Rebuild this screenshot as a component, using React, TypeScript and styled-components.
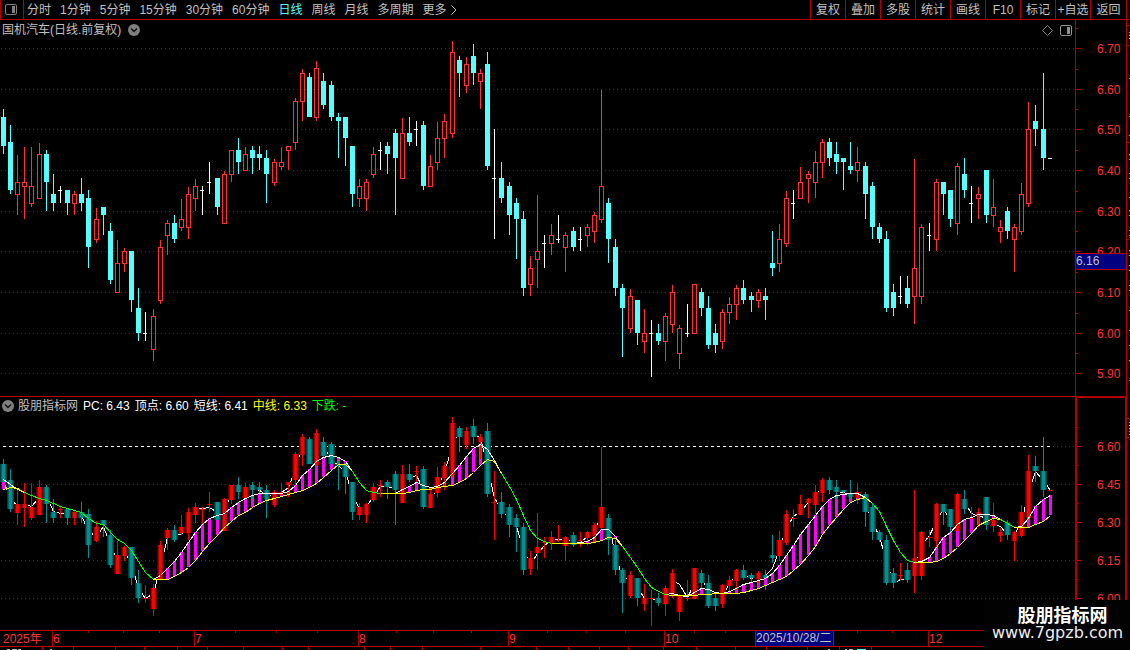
import React from "react";
import styled, { createGlobalStyle } from "styled-components";

const LINE = "#b00000";
const LABEL = "#ff3232";
const GREY = "#c0c0c0";
const FONT = '"Liberation Sans", "Noto Sans CJK SC", sans-serif';

const GlobalStyle = createGlobalStyle`
  * { box-sizing: border-box; }
  body { margin: 0; background: #000; }
  button { font: inherit; color: inherit; background: none; border: 0; padding: 0; margin: 0; cursor: pointer; }
  svg { display: block; }
`;

const Screen = styled.div`
  position: relative;
  overflow: hidden;
  background: #000;
  color: ${GREY};
  font: 12px/16px ${FONT};
`;

const TopBar = styled.header`
  display: flex;
  height: 20px;
  border-bottom: 1px solid ${LINE};
  border-left: 1px solid ${LINE};
`;

const LayoutToggle = styled.button`
  display: grid;
  place-items: center;
  width: 23px;
  padding-right: 2px;
  border-right: 1px solid ${LINE};
`;

const Periods = styled.nav`
  display: flex;
  align-items: center;
  gap: 9px;
  padding-left: 3px;
`;

const PeriodButton = styled.button<{ $active?: boolean }>`
  white-space: nowrap;
  color: ${(p) => (p.$active ? "#54ffff" : GREY)};
  display: flex;
  align-items: center;
  gap: 4px;
`;

const Tools = styled.div`
  display: flex;
  margin-left: auto;
  width: 317px;
  margin-right: 3px;
  border-right: 1px solid ${LINE};
`;

const ToolButton = styled.button`
  flex: 0 0 35px;
  border-left: 1px solid ${LINE};
  white-space: nowrap;
  display: flex;
  align-items: center;
  justify-content: center;
  &:last-child { flex: 1; }
`;

const Pane = styled.section`
  display: grid;
  grid-template-columns: minmax(0, 1fr) 52px 3px;
`;

const Plot = styled.div<{ $ruled?: boolean }>`
  border-top: ${(p) => (p.$ruled ? `1px solid ${LINE}` : "0")};
`;

const PaneHeader = styled.div<{ $height: number; $gap: number }>`
  display: flex;
  align-items: center;
  gap: ${(p) => p.$gap}px;
  height: ${(p) => p.$height}px;
  padding: 0 3px 0 2px;
  white-space: nowrap;
`;

const IndicatorName = styled.div`
  display: flex;
  align-items: center;
  gap: 4px;
`;

const HeaderTools = styled.div`
  display: flex;
  align-items: center;
  gap: 7px;
  margin-left: auto;
`;

const Reading = styled.span<{ $color: string }>`
  color: ${(p) => p.$color};
`;

const Chart = styled.svg<{ $height: number }>`
  width: 100%;
  height: ${(p) => p.$height}px;
  shape-rendering: crispEdges;
`;

const PriceAxis = styled.div<{ $thick?: boolean }>`
  position: relative;
  overflow: hidden;
  border: ${(p) => (p.$thick ? 2 : 1)}px solid ${LINE};
  border-bottom: 0;
  border-top-width: ${(p) => (p.$thick ? 2 : 0)}px;
`;

const AxisText = styled.text`
  fill: ${LABEL};
  font: 12px ${FONT};
`;

const PriceTag = styled.output`
  position: absolute;
  top: 233px;
  left: 0;
  right: 0;
  height: 17px;
  line-height: 15px;
  background: #000080;
  border: solid ${LINE};
  border-width: 1px 0;
`;

const DateAxis = styled.div`
  position: relative;
  border: solid ${LINE};
  border-width: 1px 0;
`;

const DateTag = styled.output`
  position: absolute;
  top: 0;
  left: 755px;
  height: 15px;
  line-height: 15px;
  width: 79px;
  background: #000080;
  border: solid ${LINE};
  border-width: 0 1px;
  white-space: nowrap;
`;

const Watermark = styled.aside`
  position: absolute;
  right: 0;
  bottom: 0;
  width: 146px;
  height: 50px;
  padding: 4px 6px 0 7px;
  background: #020202;
  color: #fff;
  text-align: center;
`;

const WatermarkName = styled.div`
  font: bold 18px/20px "Noto Sans CJK SC", sans-serif;
  padding-left: 10px;
`;

const WatermarkSite = styled.a`
  display: block;
  color: #eee;
  text-decoration: none;
  font: 16px/18px "DejaVu Sans", sans-serif;
`;

/* D: falling day, U: rising day, N: open equals close.
   Levels are high, body top, body bottom, low on the price pane scale. */
type Day = [string, number, number, number, number];

const DAYS: Day[] = [
  ["D", 109, 117, 146, 154], ["D", 125, 142, 190, 194], ["U", 155, 182, 195, 215], ["U", 147, 182, 187, 219],
  ["U", 147, 186, 204, 207], ["U", 143, 154, 199, 199], ["D", 150, 154, 182, 211], ["D", 174, 194, 203, 211],
  ["N", 186, 190, 191, 203], ["D", 190, 190, 203, 215], ["U", 191, 194, 204, 215], ["D", 178, 194, 203, 211],
  ["D", 190, 198, 247, 268], ["U", 208, 219, 240, 243], ["D", 207, 207, 215, 235], ["D", 223, 231, 280, 284],
  ["U", 240, 263, 293, 293], ["U", 248, 251, 264, 272], ["D", 251, 251, 300, 312], ["D", 288, 308, 333, 341],
  ["N", 312, 333, 334, 341], ["U", 309, 316, 350, 361], ["U", 240, 247, 301, 304], ["U", 220, 223, 236, 255],
  ["D", 215, 223, 239, 243], ["U", 199, 219, 228, 231], ["U", 187, 194, 228, 239], ["U", 179, 186, 199, 211],
  ["N", 186, 190, 191, 215], ["N", 162, 182, 183, 194], ["D", 178, 178, 207, 215], ["U", 171, 174, 224, 224],
  ["U", 150, 150, 175, 182], ["D", 138, 150, 162, 174], ["U", 147, 154, 171, 171], ["D", 146, 150, 158, 174],
  ["D", 146, 154, 158, 170], ["D", 150, 158, 174, 203], ["U", 159, 162, 183, 186], ["U", 147, 162, 167, 170],
  ["U", 146, 146, 151, 170], ["U", 98, 101, 143, 150], ["U", 69, 73, 102, 121], ["D", 73, 77, 117, 117],
  ["U", 61, 68, 118, 121], ["D", 73, 81, 105, 109], ["D", 81, 85, 117, 121], ["D", 113, 117, 121, 158],
  ["D", 117, 117, 138, 166], ["D", 146, 146, 194, 207], ["U", 179, 186, 199, 207], ["U", 179, 182, 199, 211],
  ["U", 147, 154, 175, 178], ["N", 142, 150, 151, 170], ["D", 142, 146, 154, 174], ["D", 129, 133, 158, 215],
  ["U", 118, 133, 179, 179], ["D", 117, 133, 142, 146], ["N", 121, 129, 130, 146], ["D", 121, 125, 186, 190],
  ["U", 155, 166, 187, 187], ["U", 122, 138, 163, 170], ["U", 114, 121, 139, 158], ["U", 41, 52, 134, 138],
  ["D", 56, 60, 73, 97], ["U", 57, 64, 86, 93], ["D", 44, 56, 73, 85], ["U", 69, 73, 82, 109],
  ["D", 52, 64, 166, 170], ["N", 129, 178, 179, 239], ["D", 162, 178, 198, 203], ["D", 182, 186, 215, 235],
  ["D", 198, 203, 219, 259], ["D", 211, 219, 288, 296], ["U", 256, 268, 285, 296], ["U", 195, 251, 260, 288],
  ["N", 235, 243, 244, 268], ["U", 224, 235, 244, 255], ["N", 215, 239, 240, 243], ["U", 232, 235, 248, 272],
  ["D", 227, 231, 247, 251], ["N", 227, 239, 240, 251], ["U", 224, 227, 236, 247], ["U", 212, 215, 232, 243],
  ["U", 90, 186, 220, 223], ["D", 198, 203, 239, 263], ["D", 239, 247, 288, 296], ["D", 284, 288, 308, 357],
  ["U", 289, 296, 329, 333], ["D", 300, 300, 333, 345], ["U", 309, 333, 342, 353], ["N", 320, 333, 334, 377],
  ["D", 324, 333, 341, 345], ["U", 313, 316, 342, 361], ["U", 285, 292, 325, 333], ["U", 325, 328, 354, 369],
  ["N", 304, 333, 334, 337], ["U", 284, 284, 334, 334], ["D", 288, 292, 308, 316], ["D", 296, 308, 345, 349],
  ["D", 324, 333, 345, 353], ["U", 309, 312, 342, 349], ["U", 297, 304, 313, 324], ["U", 285, 288, 305, 320],
  ["D", 280, 288, 300, 304], ["D", 292, 296, 300, 312], ["U", 289, 292, 301, 308], ["D", 288, 296, 300, 320],
  ["D", 231, 263, 268, 276], ["U", 224, 239, 264, 272], ["U", 191, 198, 244, 247], ["N", 190, 203, 204, 219],
  ["U", 167, 182, 199, 199], ["U", 171, 174, 179, 203], ["U", 151, 162, 183, 198], ["U", 139, 142, 163, 178],
  ["D", 138, 142, 158, 166], ["D", 142, 154, 162, 174], ["D", 158, 158, 162, 190], ["D", 142, 166, 170, 174],
  ["U", 147, 162, 171, 182], ["D", 162, 166, 194, 219], ["D", 182, 186, 227, 239], ["D", 223, 227, 239, 243],
  ["D", 231, 239, 308, 312], ["D", 284, 292, 308, 316], ["N", 276, 296, 297, 304], ["D", 276, 288, 304, 308],
  ["U", 159, 268, 297, 324], ["U", 224, 227, 297, 304], ["N", 223, 235, 236, 251], ["U", 179, 182, 240, 251],
  ["D", 182, 182, 194, 215], ["D", 190, 190, 219, 227], ["U", 163, 166, 224, 235], ["D", 158, 174, 190, 198],
  ["N", 186, 203, 204, 223], ["U", 187, 194, 199, 219], ["D", 170, 170, 215, 223], ["U", 179, 207, 216, 227],
  ["U", 220, 227, 232, 243], ["D", 207, 211, 231, 239], ["U", 224, 227, 240, 272], ["U", 183, 194, 232, 235],
  ["U", 102, 129, 204, 207], ["D", 105, 121, 129, 146], ["D", 73, 129, 158, 170], ["N", 158, 158, 159, 159],
];

/* Stretches where the short average runs above the middle one. */
const RISES = [
  { start: 0, short: [479, 484, 489, 492], mid: [489, 487, 488, 492] },
  {
    start: 21,
    short: [579, 575, 568, 561, 552, 542, 532, 524, 518, 515, 513, 507, 502, 498, 495, 493, 493, 493, 493, 491, 485, 475, 469, 461, 457, 455, 457, 461, 471],
    mid: [579, 579, 579, 576, 572, 567, 560, 551, 543, 535, 527, 521, 515, 512, 507, 503, 500, 498, 496, 494, 492, 490, 487, 483, 477, 470, 464, 464, 471],
  },
  {
    start: 53,
    short: [493, 493, 493, 489, 486, 482, 485, 487, 486, 482, 473, 465, 456, 448, 444, 449, 460, 473],
    mid: [493, 493, 493, 493, 492, 490, 489, 489, 487, 486, 485, 482, 478, 472, 465, 459, 461, 473],
  },
  {
    start: 77,
    short: [543, 543, 543, 543, 542, 541, 537, 529, 529, 536, 546],
    mid: [543, 543, 543, 543, 543, 543, 542, 540, 537, 538, 546],
  },
  {
    start: 93,
    short: [594, 593, 595, 596, 592, 588, 589, 592, 593, 591, 588, 584, 582, 580, 578, 573, 565, 555, 545, 534, 524, 515, 506, 499, 495, 494, 493, 493, 497, 503],
    mid: [594, 595, 595, 595, 595, 594, 594, 593, 593, 593, 593, 592, 590, 588, 585, 582, 579, 576, 570, 564, 555, 546, 534, 525, 517, 509, 502, 499, 497, 503],
  },
  {
    start: 128,
    short: [562, 561, 557, 547, 537, 532, 524, 519, 517, 514, 514, 515, 519],
    mid: [562, 562, 562, 561, 558, 553, 547, 540, 533, 525, 521, 518, 519],
  },
  { start: 142, short: [527, 526, 518, 506, 499, 495], mid: [527, 527, 527, 524, 521, 515] },
];

const FALLS = [
  { start: 3, mid: [492, 495, 498, 500, 503, 506, 508, 510, 512, 518, 523, 524, 532, 539, 543, 550, 561, 572, 579] },
  { start: 49, mid: [471, 482, 490, 492, 493] },
  { start: 70, mid: [473, 486, 499, 515, 530, 538, 541, 543] },
  { start: 87, mid: [546, 557, 567, 578, 587, 591, 594] },
  { start: 122, mid: [503, 511, 526, 540, 552, 560, 562] },
  { start: 140, mid: [519, 523, 527] },
];

const dayX = (i: number) => Math.round(3 + i * 7.12);
const toLower = (y: number) => Math.round(421 + (y - 48) * 0.6228);
const closeLevel = ([kind, , top, bottom]: Day) => (kind === "D" ? bottom : top);
const linePoints = (start: number, ys: number[]) =>
  ys.map((y, k) => `${dayX(start + k) + 0.5},${y + 0.5}`).join(" ");

const UPPER_LEVELS: [string, number][] = [
  ["6.70", 48], ["6.60", 89], ["6.50", 129], ["6.40", 170], ["6.30", 211],
  ["6.20", 251], ["6.10", 292], ["6.00", 333], ["5.90", 373],
];
const LOWER_LEVELS: [string, number][] = [
  ["6.60", 446], ["6.45", 484], ["6.30", 522], ["6.15", 560], ["6.00", 598],
];

function GridLines({ levels }: { levels: [string, number][] }) {
  return (
    <>
      {levels.map(([label, y]) => (
        <line key={label} x1="1" x2="100%" y1={y + 0.5} y2={y + 0.5} stroke={LINE} strokeDasharray="1 3" />
      ))}
    </>
  );
}

function Candle({ day, x }: { day: Day; x: number }) {
  const [kind, high, top, bottom, low] = day;
  if (kind === "N") {
    return (
      <g fill="#fff">
        {low - high > 1 && <rect x={x} y={high} width={1} height={low - high} />}
        <rect x={x - 2} y={top} width={4} height={1} />
      </g>
    );
  }
  if (kind === "D") {
    return (
      <g fill="#54ffff">
        <rect x={x} y={high} width={1} height={low - high} />
        <rect x={x - 2} y={top} width={5} height={bottom - top} />
      </g>
    );
  }
  return (
    <g fill={LABEL}>
      <rect x={x} y={high} width={1} height={top - high} />
      <rect x={x} y={bottom} width={1} height={Math.max(0, low - bottom)} />
      <rect x={x - 1.5} y={top + 0.5} width={4} height={bottom - top - 1} fill="none" stroke={LABEL} />
    </g>
  );
}

function ShadedCandle({ day, x }: { day: Day; x: number }) {
  const [kind, high, top, bottom, low] = day;
  const tones = kind === "D" ? ["#003c3c", "#006464", "#009090"] : ["#500000", "#a00000", "#ff0000"];
  const t = toLower(top);
  const h = kind === "N" ? 1 : Math.max(1, toLower(bottom) - t);
  const wick = toLower(low) - toLower(high);
  return (
    <g>
      <rect x={x - 3} y={t} width={7} height={h} fill={tones[0]} />
      <rect x={x - 2} y={t} width={5} height={h} fill={tones[1]} />
      <rect x={x - 1} y={t} width={3} height={h} fill={tones[2]} />
      {wick > 1 && <rect x={x} y={toLower(high)} width={1} height={wick} fill={tones[2]} />}
    </g>
  );
}

function Bands() {
  return (
    <g fill="#ff00ff">
      {RISES.flatMap((run) =>
        run.short.map((y, k) => {
          const height = run.mid[k] - y;
          return height > 1 ? (
            <rect key={run.start + k} x={dayX(run.start + k) - 1} y={y} width={3} height={height} />
          ) : null;
        })
      )}
    </g>
  );
}

function Averages() {
  return (
    <g fill="none">
      {FALLS.map((run) => (
        <polyline key={run.start} points={linePoints(run.start, run.mid)} stroke="#00ff00" />
      ))}
      {RISES.map((run) => (
        <g key={run.start}>
          <polyline points={linePoints(run.start, run.short)} stroke="#fff" />
          <polyline points={linePoints(run.start, run.mid)} stroke="#ffff00" />
        </g>
      ))}
    </g>
  );
}

const closeAverage = DAYS.map((day, i) => toLower((closeLevel(day) + closeLevel(DAYS[Math.max(0, i - 1)])) / 2));

function AxisLabels({ levels, offset, left }: { levels: [string, number][]; offset: number; left: number }) {
  const step = (levels[1][1] - levels[0][1]) / 2;
  return (
    <g>
      {levels.map(([label, y]) => (
        <g key={label}>
          <rect x={0} y={y - offset} width={5} height={1} fill={LINE} />
          <rect x={0} y={Math.round(y - offset - step)} width={2} height={1} fill={LINE} />
          <AxisText x={left} y={y - offset + 5}>{label}</AxisText>
        </g>
      ))}
    </g>
  );
}

function EdgeMarks({ rules, specks, height }: { rules: number[]; specks: number[]; height: number }) {
  return (
    <Chart $height={height} aria-hidden="true">
      {rules.map((y) => <rect key={y} x={0} y={y} width={3} height={1} fill={LINE} />)}
      {specks.map((y) => <rect key={y} x={2} y={y} width={1} height={1} fill={GREY} />)}
    </Chart>
  );
}

function SplitIcon({ muted }: { muted?: boolean }) {
  const color = muted ? "#909090" : "#808080";
  return (
    <svg width="12" height="11" viewBox="0 0 12 11" aria-hidden="true">
      <rect x="0.5" y="0.5" width="11" height="10" rx="1.5" fill="none" stroke={color} />
      <rect x="7" y="2" width="3" height="7" fill={color} />
    </svg>
  );
}

function DiamondIcon() {
  return (
    <svg width="11" height="11" viewBox="0 0 11 11" aria-hidden="true">
      <path d="M5.5 0.5 L10.5 5.5 L5.5 10.5 L0.5 5.5 Z" fill="none" stroke="#808080" />
    </svg>
  );
}

function DropIcon() {
  return (
    <svg width="12" height="12" viewBox="0 0 12 12" aria-hidden="true">
      <circle cx="6" cy="6" r="6" fill="#808080" />
      <path d="M3 4.5 L6 7.5 L9 4.5" fill="none" stroke="#101010" strokeWidth="1.5" />
    </svg>
  );
}

function MoreIcon() {
  return (
    <svg width="6" height="10" viewBox="0 0 6 10" aria-hidden="true">
      <path d="M0.5 0.5 L5 5 L0.5 9.5" fill="none" stroke={GREY} />
    </svg>
  );
}

const PERIODS = ["分时", "1分钟", "5分钟", "15分钟", "30分钟", "60分钟", "日线", "周线", "月线", "多周期"];
const TOOLS = ["复权", "叠加", "多股", "统计", "画线", "F10", "标记", "+自选", "返回"];
const MONTHS: [string, number][] = [["6", 52], ["7", 194], ["8", 358], ["9", 508], ["10", 664], ["12", 928]];
const WEEK_TICKS = [88, 123, 159, 235, 276, 317, 396, 433, 471, 547, 586, 625, 694, 725, 857, 892];
const FOOT_TICKS = [42, 73, 115, 144, 177, 207, 243, 282, 308, 364, 390, 422, 480, 536, 568, 599, 628, 663, 696, 735, 766, 807, 839, 871];

export default function App() {
  return (
    <Screen>
      <GlobalStyle />
      <TopBar>
        <LayoutToggle aria-label="布局"><SplitIcon /></LayoutToggle>
        <Periods>
          {PERIODS.map((name) => (
            <PeriodButton key={name} $active={name === "日线"}>{name}</PeriodButton>
          ))}
          <PeriodButton>更多<MoreIcon /></PeriodButton>
        </Periods>
        <Tools>
          {TOOLS.map((name) => <ToolButton key={name}>{name}</ToolButton>)}
        </Tools>
      </TopBar>

      <Pane>
        <Plot>
          <PaneHeader $height={20} $gap={7}>
            <span>国机汽车(日线.前复权)</span>
            <button aria-label="展开"><DropIcon /></button>
            <HeaderTools>
              <button aria-label="标记"><DiamondIcon /></button>
              <button aria-label="侧栏"><SplitIcon muted /></button>
            </HeaderTools>
          </PaneHeader>
          <Chart $height={356} role="img" aria-label="日线">
            <g transform="translate(0 -40)">
              <GridLines levels={UPPER_LEVELS} />
              {DAYS.map((day, i) => <Candle key={i} day={day} x={dayX(i)} />)}
            </g>
          </Chart>
        </Plot>
        <PriceAxis>
          <Chart $height={376}>
            <AxisLabels levels={UPPER_LEVELS} offset={20} left={21} />
          </Chart>
          <PriceTag>6.16</PriceTag>
        </PriceAxis>
        <EdgeMarks
          height={376}
          rules={[5, 25, 122, 219]}
          specks={[12, 15, 18, 58, 96, 115, 134, 139, 153, 158, 177, 190, 195, 210, 215, 230, 235, 245, 250, 265, 270, 290, 310, 325, 340, 360]}
        />
      </Pane>

      <Pane>
        <Plot $ruled>
          <PaneHeader $height={17} $gap={5}>
            <IndicatorName>
              <button aria-label="展开"><DropIcon /></button>
              <span>股朋指标网</span>
            </IndicatorName>
            <Reading $color="#fff">PC: 6.43</Reading>
            <Reading $color="#fff">顶点: 6.60</Reading>
            <Reading $color="#fff">短线: 6.41</Reading>
            <Reading $color="#ffff00">中线: 6.33</Reading>
            <Reading $color="#00ff00">下跌: -</Reading>
          </PaneHeader>
          <Chart $height={216} role="img" aria-label="股朋指标网">
            <g transform="translate(0 -414)">
              <GridLines levels={LOWER_LEVELS} />
              <line x1="1" x2="1052" y1="446.5" y2="446.5" stroke="#000" />
              <line x1="3" x2="1051" y1="446.5" y2="446.5" stroke="#fff" strokeDasharray="3 3" />
              <polyline points={linePoints(0, closeAverage)} fill="none" stroke="#fff" />
              <Bands />
              {DAYS.map((day, i) => <ShadedCandle key={i} day={day} x={dayX(i)} />)}
              <Averages />
            </g>
          </Chart>
        </Plot>
        <PriceAxis $thick>
          <Chart $height={202}>
            <AxisLabels levels={LOWER_LEVELS} offset={398} left={20} />
          </Chart>
        </PriceAxis>
        <EdgeMarks height={234} rules={[22, 41]} specks={[26, 29, 32, 35, 38]} />
      </Pane>

      <DateAxis>
        <Chart $height={15}>
          <AxisText x={3} y={12}>2025年</AxisText>
          {MONTHS.map(([label, x]) => (
            <g key={label}>
              <rect x={x} y={0} width={1} height={15} fill={LINE} />
              <AxisText x={x + 1} y={12}>{label}</AxisText>
            </g>
          ))}
          {WEEK_TICKS.map((x) => <rect key={x} x={x} y={0} width={1} height={2} fill={LINE} />)}
        </Chart>
        <DateTag>2025/10/28/二</DateTag>
      </DateAxis>
      <Chart $height={3} aria-hidden="true">
        {FOOT_TICKS.map((x) => <rect key={x} x={x} y={0} width={1} height={3} fill={LINE} />)}
        <path d="M7 2.5h3M12 2.5h5M18 2.5h3M50 2.5h2M828 2.5h2M845 2.5h2M849 2.5h4" stroke={GREY} />
        <path d="M857 2.5h9" stroke="#54ffff" />
      </Chart>

      <Watermark>
        <WatermarkName>股朋指标网</WatermarkName>
        <WatermarkSite href="#">www.7gpzb.com</WatermarkSite>
      </Watermark>
    </Screen>
  );
}
